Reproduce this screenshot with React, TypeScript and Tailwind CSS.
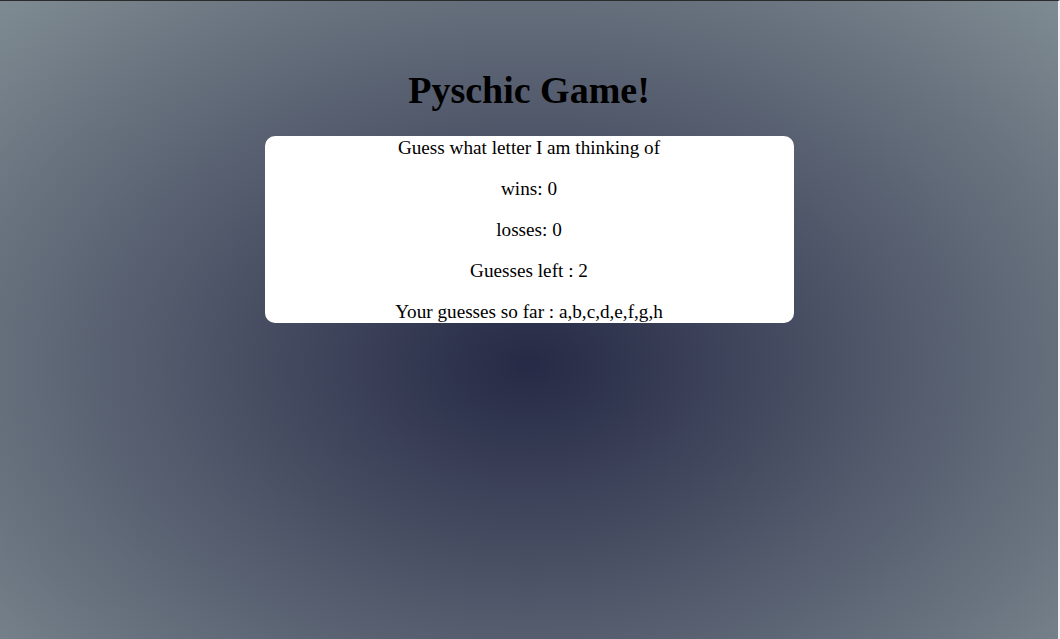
export default function App() {
  const lines = [
    "Guess what letter I am thinking of",
    "wins: 0",
    "losses: 0",
    "Guesses left : 2",
    "Your guesses so far : a,b,c,d,e,f,g,h",
  ];

  return (
    <div className="min-h-[639px] w-full border-t border-[#2b2b2b] border-r-2 border-r-[#f3eef2] bg-[radial-gradient(ellipse_at_50%_57%,#262a46_0%,#7f8b92_100%)] pt-[69px] font-['Liberation_Serif',serif] text-black">
      <h1 className="text-center text-[38px] font-bold leading-[40px]">
        Pyschic Game!
      </h1>

      <div className="mx-auto mt-[26px] flex w-1/2 flex-col gap-[18px] rounded-[10px] bg-white text-center text-[19.2px]">
        {lines.map((line) => (
          <p key={line} className="leading-[23px]">
            {line}
          </p>
        ))}
      </div>
    </div>
  );
}
